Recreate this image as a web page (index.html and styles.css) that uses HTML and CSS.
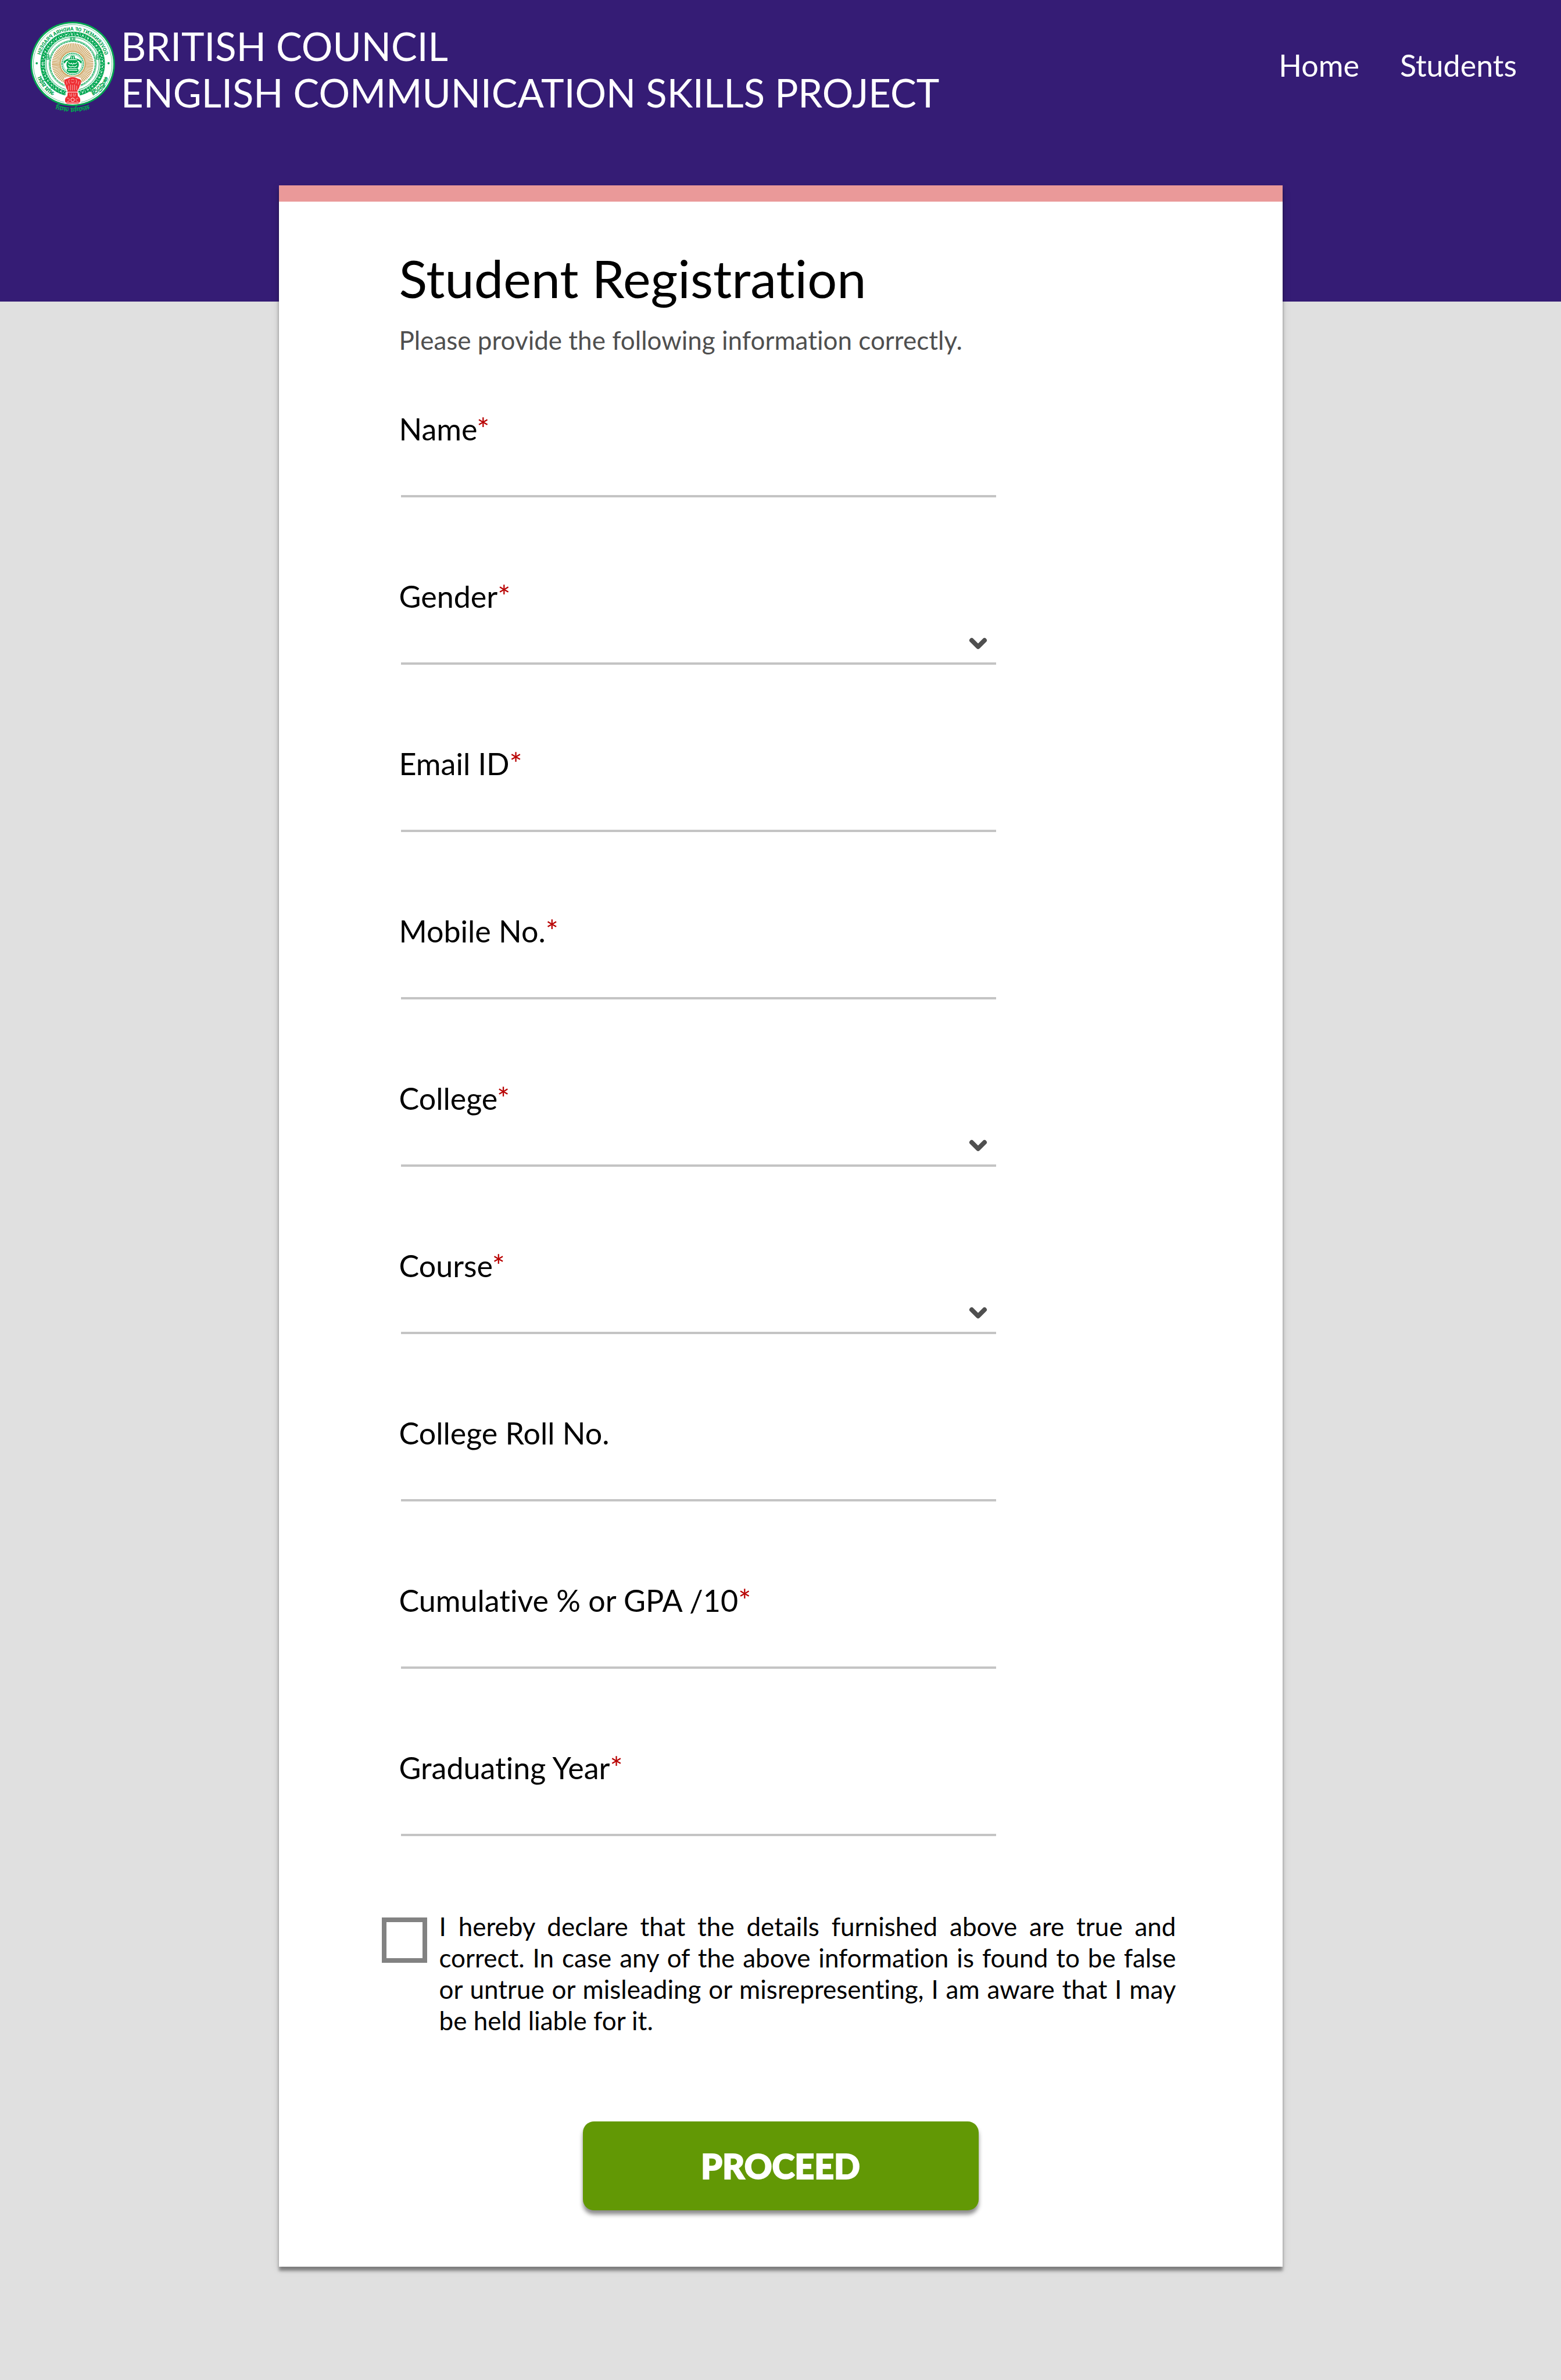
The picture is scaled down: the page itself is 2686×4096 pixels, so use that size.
FILE: index.html
```html
<!DOCTYPE html>
<html lang="en">
<head>
<meta charset="utf-8">
<meta name="viewport" content="width=device-width, initial-scale=1">
<title>Student Registration</title>
<link rel="stylesheet" href="styles.css">
</head>
<body>
<header class="site-header">
  <div class="brand">
    <svg class="emblem" viewBox="48 58 468 516" role="img" aria-label="Government of Andhra Pradesh emblem">
      <defs>
        <path id="arc-top" d="M-184 0A184 184 0 0 1 184 0"/>
        <path id="arc-low" d="M-208 0A208 208 0 0 0 208 0"/>
        <path id="arc-motto" d="M-266 0A266 266 0 0 0 266 0"/>
      </defs>
      <g transform="translate(282 292) scale(-1 1)">
        <circle r="233" fill="#00a651"/>
        <circle r="224" fill="#fff"/>
        <circle r="217" fill="none" stroke="#00a651" stroke-width="2"/>
        <circle r="165" fill="none" stroke="#00a651" stroke-width="26"/>
        <circle r="165" fill="none" stroke="#fff" stroke-width="5" stroke-dasharray="11 7 4 9"/>
        <circle r="172" fill="none" stroke="#fff" stroke-width="3" stroke-dasharray="5 12"/>
        <circle r="157" fill="none" stroke="#fff" stroke-width="3" stroke-dasharray="8 10"/>
        <circle r="146" fill="none" stroke="#00a651" stroke-width="3"/>
        <circle r="130" fill="none" stroke="#00a651" stroke-width="3"/>
        <circle r="124" fill="none" stroke="#00a651" stroke-width="4" stroke-dasharray="14 2"/>
        <path fill="#fff" stroke="#00a651" stroke-width="4" d="M-12-145H12V-131H-12ZM-145-50V-26H-131V-50ZM131-50V-26H145V-50Z"/>
        <path fill="none" stroke="#00a651" stroke-width="4" d="M-5-145V-131M5-145V-131M-145-42H-131M-145-34H-131M131-42H145M131-34H145"/>
        <circle r="92" fill="none" stroke="#cda665" stroke-width="45" stroke-dasharray="5 3.03"/>
        <circle r="69" fill="#fff" stroke="#cda665" stroke-width="7"/>
        <circle r="59" fill="none" stroke="#00a651" stroke-width="5" stroke-dasharray="8 2"/>
        <circle r="52" fill="none" stroke="#00a651" stroke-width="2"/>
        <path fill="#00a651" d="M-10-46H10L14-30Q38-30 50-12L46-2L34-16L22-18L32-8Q38 12 26 26L32 30V42L20 49H-20L-32 42V30L-26 26Q-38 12-32-8L-22-18L-34-16L-46-2L-50-12Q-38-30-14-30Z"/>
        <path fill="none" stroke="#fff" stroke-width="4" d="M-5-42V-28M5-42V-28M-24-24H24M-24-8Q-12 4-6-4Q0 8 6-4Q12 4 24-8M-24 8Q-12 22 0 12Q12 22 24 8M-24 26H24M-26 36H26"/>
        <circle cx="-198" cy="-4" r="6" fill="#00a651"/>
        <circle cx="198" cy="-4" r="6" fill="#00a651"/>
        <text class="emblem-latin"><textPath href="#arc-top" startOffset="50%">GOVERNMENT OF ANDHRA PRADESH</textPath></text>
        <text class="emblem-indic"><textPath href="#arc-low" startOffset="22%">ఆంధ్రప్రదేశ్</textPath></text>
        <text class="emblem-indic"><textPath href="#arc-low" startOffset="78%">आंध्र प्रदेश</textPath></text>
        <text class="emblem-motto"><textPath href="#arc-motto" startOffset="50%">सत्यमेव जयते</textPath></text>
        <path fill="#fff" d="M-46 78Q0 60 46 78L44 120L34 150L46 190V214Q0 228-46 214V190L-30 150L-44 120Z"/>
        <path fill="#ee2f33" d="M-18 76Q0 68 18 76L30 82Q48 84 46 100Q44 114 40 118Q34 140 28 146L30 154H-28L-26 146Q-34 140-40 118Q-46 112-46 100Q-48 84-30 82ZM-27 157H27L29 178Q42 184 42 200Q42 214 30 219H-30Q-42 214-42 200Q-42 184-29 178Z"/>
        <path fill="none" stroke="#fff" stroke-width="2" d="M-18 84Q-26 96-18 108M18 84Q26 96 18 108M-9 88Q0 80 9 88M-9 98Q0 108 9 98M-36 96Q-30 104-32 114M36 96Q30 104 32 114M-22 120V144M-11 114V146M0 116V146M11 114V146M22 120V144M-17 163L-12 180M-6 162V180M6 162V180M17 163L12 180M-31 190Q-20 186-18 198Q-20 210-31 208M31 190Q20 186 18 198Q20 210 31 208M-40 213H40"/>
        <circle cy="198" r="10" fill="none" stroke="#fff" stroke-width="3"/>
      </g>
    </svg>
    <p class="brand-name">BRITISH COUNCIL<br>ENGLISH COMMUNICATION SKILLS PROJECT</p>
  </div>
  <nav class="site-nav">
    <a href="#">Home</a>
    <a href="#">Students</a>
  </nav>
</header>
<main class="card">
  <h1 class="card-title">Student Registration</h1>
  <p class="card-intro">Please provide the following information correctly.</p>
  <form class="form">
    <div class="fields">
      <div class="field">
        <label for="name">Name<span class="required">*</span></label>
        <input class="control" id="name" type="text">
      </div>
      <div class="field">
        <label for="gender">Gender<span class="required">*</span></label>
        <div class="select-wrap">
          <select class="control" id="gender"><option></option></select>
          <svg class="chevron" viewBox="0 0 32 21" aria-hidden="true"><path d="M5 5L16 16L27 5"/></svg>
        </div>
      </div>
      <div class="field">
        <label for="email">Email ID<span class="required">*</span></label>
        <input class="control" id="email" type="email">
      </div>
      <div class="field">
        <label for="mobile">Mobile No.<span class="required">*</span></label>
        <input class="control" id="mobile" type="tel">
      </div>
      <div class="field">
        <label for="college">College<span class="required">*</span></label>
        <div class="select-wrap">
          <select class="control" id="college"><option></option></select>
          <svg class="chevron" viewBox="0 0 32 21" aria-hidden="true"><path d="M5 5L16 16L27 5"/></svg>
        </div>
      </div>
      <div class="field">
        <label for="course">Course<span class="required">*</span></label>
        <div class="select-wrap">
          <select class="control" id="course"><option></option></select>
          <svg class="chevron" viewBox="0 0 32 21" aria-hidden="true"><path d="M5 5L16 16L27 5"/></svg>
        </div>
      </div>
      <div class="field">
        <label for="roll">College Roll No.</label>
        <input class="control" id="roll" type="text">
      </div>
      <div class="field">
        <label for="gpa">Cumulative % or GPA /10<span class="required">*</span></label>
        <input class="control" id="gpa" type="text">
      </div>
      <div class="field">
        <label for="year">Graduating Year<span class="required">*</span></label>
        <input class="control" id="year" type="text">
      </div>
    </div>
    <div class="declaration">
      <input class="tick" id="declare" type="checkbox">
      <label for="declare">I hereby declare that the details furnished above are true and correct. In case any of the above information is found to be false or untrue or misleading or misrepresenting, I am aware that I may be held liable for it.</label>
    </div>
    <button class="proceed" type="submit">PROCEED</button>
  </form>
</main>
</body>
</html>
```
FILE: styles.css
```css
* {
  box-sizing: border-box;
}

body {
  margin: 0;
  padding-bottom: 196px;
  background: #e0e0e0;
  color: #000;
  font-family: Lato, "Noto Sans", sans-serif;
  font-variant-ligatures: none;
}

.site-header {
  display: flex;
  justify-content: space-between;
  align-items: flex-start;
  padding: 37px 76px 320px 52px;
  background: #351c75;
  color: #fff;
}

.brand {
  display: flex;
  gap: 10px;
}

.emblem {
  flex: none;
  width: 146px;
  height: 161px;
}

.emblem-latin,
.emblem-indic,
.emblem-motto {
  fill: #00a651;
  text-anchor: middle;
  font-family: Roboto, "Noto Sans", sans-serif;
}

.emblem-latin {
  font-size: 28px;
  font-weight: 700;
}

.emblem-indic {
  font-size: 34px;
  font-weight: 700;
}

.emblem-motto {
  font-size: 38px;
  font-weight: 700;
}

.brand-name {
  margin: 2px 0 0;
  font-size: 67px;
  line-height: 80px;
}

.site-nav {
  display: flex;
  gap: 70px;
  padding-top: 44px;
  font-size: 52px;
  line-height: 62px;
}

.site-nav a {
  color: inherit;
  text-decoration: none;
}

.card {
  width: 1727px;
  max-width: 100%;
  margin: -200px auto 0;
  padding: 77px 177px 97px;
  border-top: 28px solid #ea9999;
  background: #fff;
  box-shadow: 0 7px 5px rgba(0, 0, 0, .4), 0 4px 15px rgba(0, 0, 0, .1);
}

.card-title {
  margin: 0 0 0 30px;
  font-size: 90px;
  font-weight: 400;
  line-height: 108px;
}

.card-intro {
  margin: 26px 0 0 30px;
  color: #4f4f4f;
  font-size: 44px;
  line-height: 54px;
}

.form {
  display: flex;
  flex-direction: column;
  margin-top: 95px;
}

.fields {
  display: grid;
  gap: 139px;
  max-width: 1057px;
  padding-left: 30px;
}

.field {
  display: grid;
  font-size: 52px;
  line-height: 62px;
}

.required {
  color: #b80000;
}

.select-wrap {
  display: grid;
}

.control {
  justify-self: end;
  width: 1024px;
  max-width: 100%;
  height: 87px;
  margin: 0;
  padding: 0 8px;
  border: 0;
  border-bottom: 4px solid #c4c4c4;
  border-radius: 0;
  outline: 0;
  background: transparent;
  color: inherit;
  font: inherit;
  appearance: none;
}

.select-wrap > * {
  grid-area: 1 / 1;
}

.chevron {
  align-self: end;
  justify-self: end;
  width: 32px;
  height: 21px;
  margin: 0 15px 26px 0;
  pointer-events: none;
}

.chevron path {
  fill: none;
  stroke: #4f4f4f;
  stroke-width: 8;
  stroke-linecap: round;
  stroke-linejoin: round;
}

.declaration {
  display: flex;
  align-items: flex-start;
  gap: 21px;
  margin-top: 128px;
}

.declaration label {
  max-width: 1268px;
  font-size: 44px;
  line-height: 54px;
  text-align: justify;
}

.tick {
  flex: none;
  width: 78px;
  height: 78px;
  margin: 12px 0 0;
  border: 8px solid #828282;
  background: #fff;
  appearance: none;
}

.proceed {
  align-self: center;
  width: 681px;
  max-width: 100%;
  height: 153px;
  margin-top: 147px;
  padding: 0;
  border: 0;
  border-radius: 19px;
  background: #629805;
  color: #fff;
  font-family: inherit;
  font-size: 59px;
  font-weight: 900;
  -webkit-text-stroke: 2px #fff;
  box-shadow: 0 7px 7px rgba(0, 0, 0, .45);
}
```
